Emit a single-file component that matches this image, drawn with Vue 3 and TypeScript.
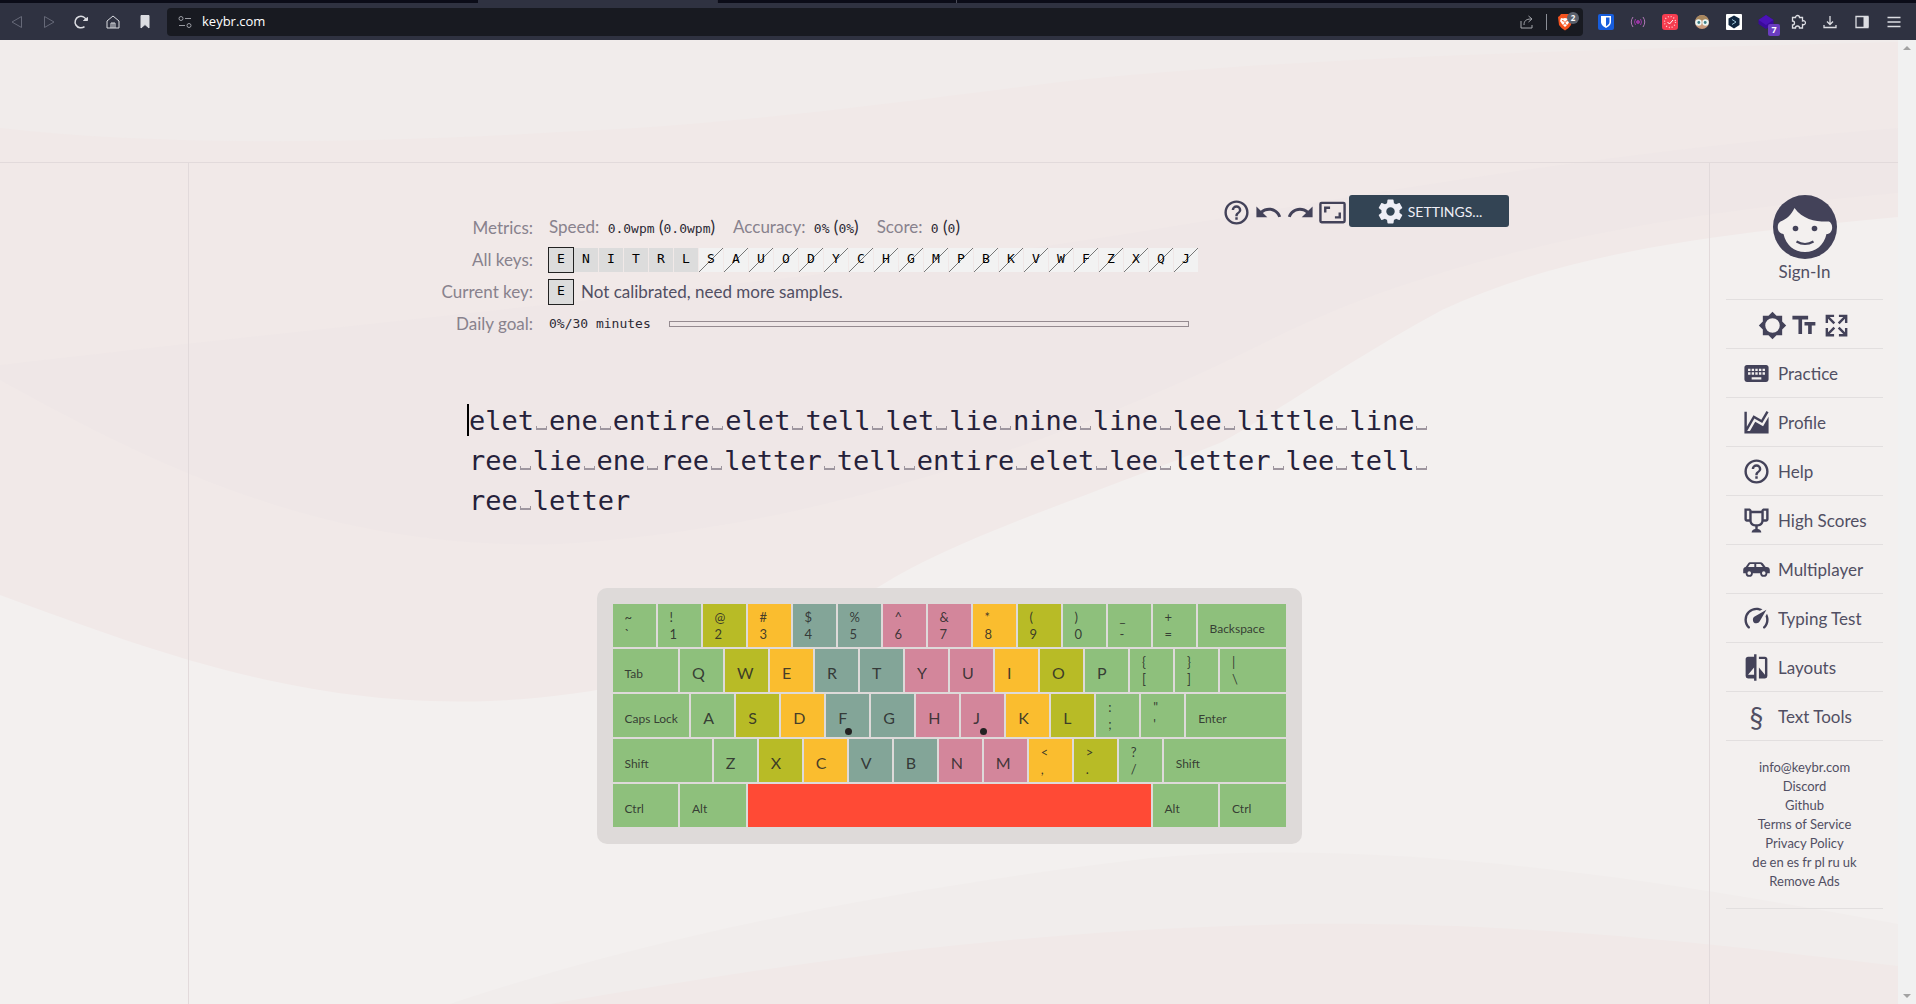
<script setup lang="ts">
interface Key {
  units: number
  zone: string
  label?: string
  letter?: string
  upper?: string
  lower?: string
  home?: boolean
}
interface NavItem {
  label: string
  icon?: string
  glyph?: string
}

const icons: Record<string, string> = {
  help: 'M11,18H13V16H11V18M12,2A10,10 0 0,0 2,12A10,10 0 0,0 12,22A10,10 0 0,0 22,12A10,10 0 0,0 12,2M12,20C7.59,20 4,16.41 4,12C4,7.59 7.59,4 12,4C16.41,4 20,7.59 20,12C20,16.41 16.41,20 12,20M12,6A4,4 0 0,0 8,10H10A2,2 0 0,1 12,8A2,2 0 0,1 14,10C14,12 11,11.75 11,15H13C13,12.75 16,12.5 16,10A4,4 0 0,0 12,6Z',
  undo: 'M12.5,8C9.85,8 7.45,9 5.6,10.6L2,7V16H11L7.38,12.38C8.77,11.22 10.54,10.5 12.5,10.5C16.04,10.5 19.05,12.81 20.1,16L22.47,15.22C21.08,11.03 17.15,8 12.5,8Z',
  redo: 'M18.4,10.6C16.55,9 14.15,8 11.5,8C6.85,8 2.92,11.03 1.54,15.22L3.9,16C4.95,12.81 7.95,10.5 11.5,10.5C13.45,10.5 15.23,11.22 16.62,12.38L13,16H22V7L18.4,10.6Z',
  aspect: 'M19,12H17V15H14V17H19V12M7,9H10V7H5V12H7V9M21,3H3A2,2 0 0,0 1,5V19A2,2 0 0,0 3,21H21A2,2 0 0,0 23,19V5A2,2 0 0,0 21,3M21,19H3V5H21V19Z',
  cog: 'M12,15.5A3.5,3.5 0 0,1 8.5,12A3.5,3.5 0 0,1 12,8.5A3.5,3.5 0 0,1 15.5,12A3.5,3.5 0 0,1 12,15.5M19.43,12.97C19.47,12.65 19.5,12.33 19.5,12C19.5,11.67 19.47,11.34 19.43,11L21.54,9.37C21.73,9.22 21.78,8.95 21.66,8.73L19.66,5.27C19.54,5.05 19.27,4.96 19.05,5.05L16.56,6.05C16.04,5.66 15.5,5.32 14.87,5.07L14.5,2.42C14.46,2.18 14.25,2 14,2H10C9.75,2 9.54,2.18 9.5,2.42L9.13,5.07C8.5,5.32 7.96,5.66 7.44,6.05L4.95,5.05C4.73,4.96 4.46,5.05 4.34,5.27L2.34,8.73C2.21,8.95 2.27,9.22 2.46,9.37L4.57,11C4.53,11.34 4.5,11.67 4.5,12C4.5,12.33 4.53,12.65 4.57,12.97L2.46,14.63C2.27,14.78 2.21,15.05 2.34,15.27L4.34,18.73C4.46,18.95 4.73,19.03 4.95,18.95L7.44,17.94C7.96,18.34 8.5,18.68 9.13,18.93L9.5,21.58C9.54,21.82 9.75,22 10,22H14C14.25,22 14.46,21.82 14.5,21.58L14.87,18.93C15.5,18.67 16.04,18.34 16.56,17.94L19.05,18.95C19.27,19.03 19.54,18.95 19.66,18.73L21.66,15.27C21.78,15.05 21.73,14.78 21.54,14.63L19.43,12.97Z',
  theme: 'M12,18A6,6 0 0,1 6,12A6,6 0 0,1 12,6A6,6 0 0,1 18,12A6,6 0 0,1 12,18M20,15.31L23.31,12L20,8.69V4H15.31L12,0.69L8.69,4H4V8.69L0.69,12L4,15.31V20H8.69L12,23.31L15.31,20H20V15.31Z',
  font: 'M2,4V7H7V19H10V7H15V4H2M21,9H12V12H15V19H18V12H21V9Z',
  expand: 'M9.5,13.09L10.91,14.5L6.41,19H10V21H3V14H5V17.59L9.5,13.09M10.91,9.5L9.5,10.91L5,6.41V10H3V3H10V5H6.41L10.91,9.5M14.5,13.09L19,17.59V14H21V21H14V19H17.59L13.09,14.5L14.5,13.09M13.09,9.5L17.59,5H14V3H21V10H19V6.41L14.5,10.91L13.09,9.5Z',
  keyboard: 'M19,10H17V8H19M19,13H17V11H19M16,10H14V8H16M16,13H14V11H16M16,17H8V15H16M7,10H5V8H7M7,13H5V11H7M8,11H10V13H8M8,8H10V10H8M11,11H13V13H11M11,8H13V10H11M20,5H4C2.89,5 2,5.89 2,7V17A2,2 0 0,0 4,19H20A2,2 0 0,0 22,17V7C22,5.89 21.1,5 20,5Z',
  chart: 'M17.45,15.18L22,7.31V21H2V3H4V15.54L9.5,6L16,9.78L20.24,2.45L21.97,3.45L16.74,12.5L10.23,8.75L4.31,19H6.57L10.96,11.44L17.45,15.18Z',
  trophy: 'M18 2C17.1 2 16 3 16 4H8C8 3 6.9 2 6 2H2V11C2 12 3 13 4 13H6.2C6.6 15 7.9 16.7 11 17V19.08C8 19.54 8 22 8 22H16C16 22 16 19.54 13 19.08V17C16.1 16.7 17.4 15 17.8 13H20C21 13 22 12 22 11V2H18M6 11H4V4H6V11M16 11.5C16 13.43 15.42 15 12 15C8.59 15 8 13.43 8 11.5V6H16V11.5M20 11H18V4H20V11Z',
  car: 'M7.2,6H15.2C16,6 16.7,6.3 17.2,6.9L19.6,10H20.5C22,10 23,11 23,12.5V15H21A3,3 0 0,1 15,15H9A3,3 0 0,1 3,15H1V12.5C1,11 1.8,10.2 3,10L4.9,7.2C5.4,6.4 6.2,6 7.2,6M7,7.5C6.6,7.5 6.4,7.7 6.2,8L5,10H10.2V7.5H7M11.8,7.5V10H17.3L15.8,8C15.5,7.6 15.2,7.5 14.8,7.5H11.8M6,13.5A1.5,1.5 0 1,0 6,16.5A1.5,1.5 0 1,0 6,13.5M18,13.5A1.5,1.5 0 1,0 18,16.5A1.5,1.5 0 1,0 18,13.5Z',
  gauge: 'M12,16A3,3 0 0,1 9,13C9,11.88 9.61,10.9 10.5,10.39L20.21,4.77L14.68,14.35C14.18,15.33 13.17,16 12,16M12,3C13.81,3 15.5,3.5 16.97,4.32L14.87,5.53C14,5.19 13,5 12,5A8,8 0 0,0 4,13C4,15.21 4.89,17.21 6.34,18.65C6.74,19.04 6.74,19.67 6.35,20.06C5.96,20.45 5.32,20.45 4.93,20.07C3.12,18.26 2,15.76 2,13A10,10 0 0,1 12,3M22,13C22,15.76 20.88,18.26 19.07,20.07C18.68,20.45 18.05,20.45 17.66,20.06C17.27,19.67 17.27,19.04 17.66,18.65C19.11,17.2 20,15.21 20,13C20,12 19.81,11 19.46,10.1L20.67,8C21.5,9.5 22,11.18 22,13Z',
  compare: 'M19,3H14V5H19V18L14,12V21H19A2,2 0 0,0 21,19V5C21,3.89 20.1,3 19,3M10,18H5L10,12M10,3H5C3.89,3 3,3.89 3,5V19A2,2 0 0,0 5,21H10V23H12V1H10V3Z',
}

const navItems: NavItem[] = [
  { label: 'Practice', icon: 'keyboard' },
  { label: 'Profile', icon: 'chart' },
  { label: 'Help', icon: 'help' },
  { label: 'High Scores', icon: 'trophy' },
  { label: 'Multiplayer', icon: 'car' },
  { label: 'Typing Test', icon: 'gauge' },
  { label: 'Layouts', icon: 'compare' },
  { label: 'Text Tools', glyph: '§' },
]
const footerLinks = ['info@keybr.com', 'Discord', 'Github', 'Terms of Service', 'Privacy Policy']
const locales = ['de', 'en', 'es', 'fr', 'pl', 'ru', 'uk']

const metrics = [
  { name: 'Speed', last: '0.0wpm', average: '0.0wpm' },
  { name: 'Accuracy', last: '0%', average: '0%' },
  { name: 'Score', last: '0', average: '0' },
]
const allKeys = 'ENITRLSAUODYCHGMPBKVWFZXQJ'.split('')
const included = 6

const lines = [
  'elet ene entire elet tell let lie nine line lee little line ',
  'ree lie ene ree letter tell entire elet lee letter lee tell ',
  'ree letter',
].map((line) => line.split(/( )/).filter((part) => part !== ''))

const G = 'pinky'
const O = 'ring'
const Y = 'middle'
const B = 'left-index'
const P = 'right-index'
const wide = (label: string, units: number): Key => ({ label, units, zone: G })
const pair = (chars: string, zone: string, units = 1): Key => ({ upper: chars[0], lower: chars[1], zone, units })
const letter = (char: string, zone: string): Key => ({ letter: char, zone, units: 1, home: char === 'F' || char === 'J' })

const rows: Key[][] = [
  [pair('~`', G), pair('!1', G), pair('@2', O), pair('#3', Y), pair('$4', B), pair('%5', B), pair('^6', P), pair('&7', P), pair('*8', Y), pair('(9', O), pair(')0', G), pair('_-', G), pair('+=', G), wide('Backspace', 2)],
  [wide('Tab', 1.5), letter('Q', G), letter('W', O), letter('E', Y), letter('R', B), letter('T', B), letter('Y', P), letter('U', P), letter('I', Y), letter('O', O), letter('P', G), pair('{[', G), pair('}]', G), pair('|\\', G, 1.5)],
  [wide('Caps Lock', 1.75), letter('A', G), letter('S', O), letter('D', Y), letter('F', B), letter('G', B), letter('H', P), letter('J', P), letter('K', Y), letter('L', O), pair(':;', G), pair('"\'', G), wide('Enter', 2.25)],
  [wide('Shift', 2.25), letter('Z', G), letter('X', O), letter('C', Y), letter('V', B), letter('B', B), letter('N', P), letter('M', P), pair('<,', Y), pair('>.', O), pair('?/', G), wide('Shift', 2.75)],
  [wide('Ctrl', 1.5), wide('Alt', 1.5), { units: 9, zone: 'thumb' }, wide('Alt', 1.5), wide('Ctrl', 1.5)],
]
</script>

<template>
  <div class="window">
    <div class="tabs"><span class="tab"></span><span class="tab active"></span><span class="tab next"></span></div>
    <header class="browser">
      <button class="tool dim" aria-label="Back"><svg viewBox="0 0 16 16"><path d="M12.5 2.5v11L3 8z" /></svg></button>
      <button class="tool dim" aria-label="Forward"><svg viewBox="0 0 16 16"><path d="M3.500 2.500v11L13 8z" /></svg></button>
      <button class="tool" aria-label="Reload"><svg viewBox="0 0 16 16"><path d="M11.500 12.600A5.800 5.800 0 1 1 13.500 6.500" stroke-width="1.500" /><path d="M10.500 6.500h4V3.500z" fill="currentColor" /></svg></button>
      <button class="tool" aria-label="Home"><svg viewBox="0 0 16 16"><path d="M2 7l6-5 6 5v7H2zM6 14V9h4v5M8 9v5" /></svg></button>
      <button class="tool" aria-label="Bookmark"><svg viewBox="0 0 16 16"><path d="M4 1.500h8v12.500L8 10.500 4 14z" fill="currentColor" /></svg></button>
      <div class="address">
        <svg class="site" viewBox="0 0 16 16"><circle cx="4" cy="4.500" r="2" /><path d="M8 4.500h6M2 11.500h6" /><circle cx="12" cy="11.500" r="2" /></svg>
        <input type="text" value="keybr.com" aria-label="Address" />
        <button class="tool soft" aria-label="Share"><svg viewBox="0 0 16 16"><path d="M2 7v7h11v-3M5 11c0-4 2-6 7-6M9.500 2L13 5l-3.500 3" /></svg></button>
        <span class="divider"></span>
        <button class="tool shield" aria-label="Shields">
          <svg viewBox="0 0 18 18"><path d="M5 1h8l1.500 2L16 4l-1 8-2.500 3L9 17.500 5.500 15 3 12 2 4l1.500-1z" fill="#f4531f" stroke="none" /><path d="M5 5l2 .5L9 5l2 .5L13 5l1 3-2 3-3 3-3-3-2-3z" fill="#fff" stroke="none" /><path d="M6 7.500l2 .7M12 7.500l-2 .7M9 8v2.500l-1.500 1M9 10.500l1.500 1" stroke="#f4531f" /></svg>
          <b class="count">2</b>
        </button>
      </div>
      <div class="extensions">
        <button class="tool" aria-label="Bitwarden"><svg viewBox="0 0 16 16"><rect width="16" height="16" rx="2" fill="#175ddc" stroke="none" /><path d="M3 2h10v6c0 3-3 5-5 6-2-1-5-3-5-6z" fill="#fff" stroke="none" /><path d="M8 3.500h3.500V8c0 2-2 3.500-3.500 4.300z" fill="#175ddc" stroke="none" /></svg></button>
        <button class="tool" aria-label="Podcast"><svg viewBox="0 0 16 16"><g stroke="#9a35a5"><circle cx="8" cy="8" r="1.500" fill="#9a35a5" /><path d="M5.500 5q-2 3 0 6M10.500 5q2 3 0 6" /><path d="M3 3q-3.500 5 0 10M13 3q3.500 5 0 10" stroke="#b07bb6" /></g></svg></button>
        <button class="tool" aria-label="Clock"><svg viewBox="0 0 16 16"><rect width="16" height="16" rx="3" fill="#f63d50" stroke="none" /><circle cx="8" cy="8" r="5.500" stroke="#ffd0d0" stroke-width="1.300" stroke-dasharray="1 1.880" /><path d="M5.500 8l2 2 3.500-4" stroke="#fff" /></svg></button>
        <button class="tool" aria-label="Profile"><svg viewBox="0 0 16 16"><g stroke="none"><circle cx="8" cy="8" r="7" fill="#c99a7c" /><path d="M1.500 6a6.800 6.800 0 0 1 13 0z" fill="#a7875e" /><circle cx="4.500" cy="8.500" r="3.200" fill="#e9f4f3" /><circle cx="11.500" cy="8.500" r="3.200" fill="#e9f4f3" /><circle cx="4.800" cy="8.500" r="1.400" fill="#3b7d85" /><circle cx="11.200" cy="8.500" r="1.400" fill="#3b7d85" /></g></svg></button>
        <button class="tool" aria-label="Translate"><svg viewBox="0 0 16 16"><rect width="16" height="16" rx="1" fill="#fff" stroke="none" /><path d="M8 1.500l5.500 3v6.500L8 14.500l-5.500-3.500V4.500z" fill="#10263f" stroke="none" /><path d="M6 5.500l4 2.500-4 2.500" stroke="#9cc4d8" /></svg></button>
        <button class="tool stack" aria-label="Layers"><svg viewBox="0 0 16 16"><path d="M8 1l7.500 5v4L8 15 .5 10V6z" fill="#3a0a9c" stroke="none" /><path d="M8 1l7.500 5L8 11 .5 6z" fill="#4b12b8" stroke="none" /></svg><b class="badge">7</b></button>
        <button class="tool" aria-label="Extensions"><svg viewBox="0 0 16 16"><path d="M2.500 3.500h3a2 2 0 1 1 4 0h3v3.500a2 2 0 1 1 0 3.500v3.500h-3a2 2 0 0 0-4 0h-3v-3a2 2 0 0 0 0-4z" stroke-width="1.300" /></svg></button>
        <button class="tool" aria-label="Downloads"><svg viewBox="0 0 16 16"><path d="M8 2v8M5 7.500l3 3 3-3M2 11v2.500h12V11" stroke-width="1.300" /></svg></button>
        <button class="tool" aria-label="Sidebar"><svg viewBox="0 0 16 16"><path d="M2 2.500h12v11H2z" stroke-width="1.300" /><path d="M10 3h4v10h-4z" fill="currentColor" /></svg></button>
        <button class="tool" aria-label="Menu"><svg viewBox="0 0 16 16"><path d="M1.500 3.500h13M1.500 8h13M1.500 12.500h13" stroke-width="1.400" /></svg></button>
      </div>
    </header>

    <div class="viewport">
      <div class="page">
        <svg class="waves" viewBox="0 0 1898 964" preserveAspectRatio="none" aria-hidden="true">
          <rect width="1898" height="964" fill="#f3f0ef" />
          <path d="M0 0H1898V177C1700 195 1560 215 1442 270C1350 320 1280 370 1222 402C1080 460 960 496 880 546C740 625 620 655 490 661C300 668 150 610 0 555Z" fill="#f1e9e8" />
          <path d="M0 340C180 440 340 510 560 504C800 490 1050 410 1270 300C1430 220 1640 175 1898 153V88C1500 120 1250 180 980 215C700 250 300 290 0 325Z" fill="#efe7e7" />
          <path d="M0 0H1898V2C1600 10 1300 16 1060 42C880 65 720 86 560 92C360 104 160 106 0 88Z" fill="#f1eceb" />
          <path d="M450 964C640 900 880 850 1150 818C1380 798 1640 836 1898 884V964Z" fill="#f1edec" />
          <path d="M550 964C780 925 1000 890 1300 884C1520 882 1700 902 1898 926V964Z" fill="#f1e9e8" />
        </svg>

        <div class="banner"></div>
        <div class="columns">
          <aside class="gutter"></aside>
          <main>
            <div class="practice">
              <div class="top">
                <dl class="metrics">
                  <div class="metric">
                    <dt>Metrics:</dt>
                    <dd class="values">
                      <span v-for="m in metrics" :key="m.name">{{ m.name }}: <span class="value"><b>{{ m.last }}</b> (<b>{{ m.average }}</b>)</span></span>
                    </dd>
                  </div>
                  <div class="metric">
                    <dt>All keys:</dt>
                    <dd class="cells">
                      <span v-for="(k, i) in allKeys" :key="k" class="cell" :class="{ focused: i === 0, excluded: i >= included }">{{ k }}</span>
                    </dd>
                  </div>
                  <div class="metric">
                    <dt>Current key:</dt>
                    <dd class="current"><span class="cell focused">E</span><span>Not calibrated, need more samples.</span></dd>
                  </div>
                  <div class="metric">
                    <dt>Daily goal:</dt>
                    <dd class="goal"><b>0%/30 minutes</b><span class="bar" role="progressbar" aria-valuenow="0"></span></dd>
                  </div>
                </dl>
                <div class="controls">
                  <button v-for="name in ['help', 'undo', 'redo', 'aspect']" :key="name" class="icon-button" :aria-label="name">
                    <svg class="icon" viewBox="0 0 24 24"><path :d="icons[name]" /></svg>
                  </button>
                  <button class="settings"><svg class="icon" viewBox="0 0 24 24"><path :d="icons.cog" /></svg>SETTINGS...</button>
                </div>
              </div>

              <div class="typing">
                <span class="cursor"></span>
                <div v-for="(line, i) in lines" :key="i" class="line">
                  <template v-for="(part, j) in line" :key="j"><span v-if="part === ' '" class="space">{{ part }}</span><span v-else>{{ part }}</span></template>
                </div>
              </div>

              <div class="keyboard">
                <div v-for="(row, r) in rows" :key="r" class="row">
                  <div v-for="(k, i) in row" :key="i" class="key" :class="k.zone" :style="{ flexGrow: k.units * 45 - 2 }">
                    <span v-if="k.label" class="label">{{ k.label }}</span>
                    <span v-if="k.letter" class="letter">{{ k.letter }}</span>
                    <template v-if="k.upper"><span class="sym">{{ k.upper }}</span><span class="sym">{{ k.lower }}</span></template>
                    <i v-if="k.home" class="dot"></i>
                  </div>
                </div>
              </div>
            </div>
          </main>

          <aside class="sidebar">
            <a href="#" class="account">
              <svg class="avatar" viewBox="0 0 64 64">
                <circle cx="32" cy="32" r="32" fill="#434259" />
                <path d="M21.500 13C18 20 14 24 7.500 26.500C3 29 4 39 10.500 39C13 50 21 57 32 57C43 57 51 50 53.500 39C60 39 61 29 56 26.500C44 27 30 25 21.500 13Z" fill="#f3f0ef" />
                <circle cx="22.500" cy="33.500" r="2.800" fill="#434259" /><circle cx="41.500" cy="33.500" r="2.800" fill="#434259" />
                <path d="M23.500 46.500Q32 51.500 40.500 46.500" fill="none" stroke="#434259" stroke-width="2.200" />
              </svg>
              <span>Sign-In</span>
            </a>
            <div class="quick">
              <button v-for="name in ['theme', 'font', 'expand']" :key="name" class="icon-button" :aria-label="name">
                <svg class="icon" viewBox="0 0 24 24"><path :d="icons[name]" /></svg>
              </button>
            </div>
            <nav>
              <a v-for="item in navItems" :key="item.label" href="#">
                <svg v-if="item.icon" class="icon" viewBox="0 0 24 24"><path :d="icons[item.icon]" /></svg>
                <span v-else class="glyph">{{ item.glyph }}</span>
                {{ item.label }}
              </a>
            </nav>
            <footer>
              <a v-for="l in footerLinks" :key="l" href="#">{{ l }}</a>
              <div class="locales"><a v-for="l in locales" :key="l" href="#">{{ l }}</a></div>
              <a href="#">Remove Ads</a>
            </footer>
          </aside>
        </div>
      </div>
      <div class="scrollbar"><i class="up"></i><i class="down"></i></div>
    </div>
  </div>
</template>

<style>
body { background: #f3f0ef; }
</style>

<style scoped>
* { box-sizing: border-box; }
.window {
  display: flex;
  flex-direction: column;
  min-height: 100vh;
  font-family: Lato, "Open Sans", sans-serif;
  font-size: 17px;
  line-height: 20px;
  color: #514f63;
}
button { padding: 0; border: 0; background: none; font: inherit; color: inherit; }
a { color: inherit; text-decoration: none; }

.tabs { display: flex; height: 3px; background: #0b0c18; }
.tab { width: 25%; border-right: 1px solid #2c2d3a; }
.tab.active { width: 240px; margin-left: -1px; background: #2f3241; }
.tab.next { width: 239px; border-color: #4a4b58; }
.browser { display: flex; align-items: center; height: 37px; padding: 0 6px 0 1px; background: #2f3241; color: #dcdde2; }
.tool { position: relative; display: flex; align-items: center; justify-content: center; width: 32px; height: 28px; flex: none; }
.tool svg, .site { width: 16px; height: 16px; fill: none; stroke: currentColor; }
.dim { color: #666978; }
.soft { color: #a5a7ad; }
.address { display: flex; align-items: center; flex: 1; height: 28px; margin: 0 7px 0 6px; padding-left: 10px; border-radius: 4px; background: #181a21; }
.site { color: #9a9ca3; }
.address input {
  flex: 1;
  min-width: 0;
  height: 20px;
  padding: 0;
  margin: 0 0 2px 9px;
  border: 0;
  outline: 0;
  background: none;
  color: #fff;
  font: 13px/20px "Open Sans", "Noto Sans", sans-serif;
}
.divider { width: 1px; height: 16px; margin-left: 3px; background: #8b8e96; }
.tool.shield { width: 36px; }
.tool.shield svg { width: 18px; height: 18px; }
.count, .badge { position: absolute; color: #fff; font: 700 8px/12px "Open Sans", sans-serif; text-align: center; }
.count { top: 4px; right: 4px; width: 12px; border-radius: 6px; background: #5b616d; }
.badge { right: 2px; bottom: 0; width: 12px; border-radius: 2px; background: #6a3dbf; font-size: 9px; }
.extensions { display: flex; }

.viewport { display: flex; flex: 1; }
.page { position: relative; display: flex; flex-direction: column; flex: 1; }
.waves { position: absolute; inset: 0; z-index: -1; width: 100%; height: 100%; }
.scrollbar { display: flex; flex-direction: column; justify-content: space-between; align-items: center; width: 18px; padding: 6px 0; background: #f1f1f1; }
.scrollbar i { border: 4px solid transparent; }
.scrollbar .up { border-top: 0; border-bottom-color: #a3a3a3; }
.scrollbar .down { border-bottom: 0; border-top-color: #a3a3a3; }
.banner { height: 123px; border-bottom: 1px solid #e2dadb; }
.columns { display: flex; flex: 1; }
.gutter { width: 189px; border-right: 1px solid #e2dadb; }
main { flex: 1; padding: 32px 0; }
.practice { max-width: 1120px; margin: 0 auto; }
.top { display: flex; justify-content: space-between; align-items: flex-start; }

.metrics { margin: 17px 0 0; }
.metric { display: flex; align-items: center; gap: 16px; height: 32px; }
dt { width: 144px; text-align: right; color: #88828d; }
dd { display: flex; align-items: center; margin: 0; }
dd b { font: 13px/20px "DejaVu Sans Mono", monospace; color: #2d2a35; }
.values { gap: 18px; color: #88828d; }
.value { margin-left: 4px; font-size: 17px; color: #2d2a35; }
.cells { gap: 1px; }
.cell { width: 24px; height: 24px; background: #dcdcdc; color: #000; font: 13px/22px "DejaVu Sans Mono", monospace; text-align: center; }
.cell.focused { outline: 1px solid #222; z-index: 1; }
.cell.excluded { background: linear-gradient(to bottom right, transparent 48%, #777 49%, #777 51%, transparent 52%) #f2f2f2; }
.current { gap: 8px; }
.goal { gap: 18px; }
.bar { width: 520px; height: 6px; border: 1px solid #958b90; }

.controls { display: flex; align-items: center; }
.icon { display: block; width: 29px; height: 29px; flex: none; fill: #434259; }
.icon-button { display: flex; align-items: center; justify-content: center; width: 32px; height: 32px; padding-top: 2px; }
.settings { display: flex; align-items: center; justify-content: center; gap: 3px; width: 160px; height: 32px; padding-top: 1px; margin-left: 1px; border-radius: 3px; background: #334454; color: #eeeef6; font-size: 14px; }
.settings .icon { fill: #eeeef6; }

.typing { position: relative; width: 960px; margin: 61px auto 0; color: #25213a; font: 27px/40px "DejaVu Sans Mono", monospace; }
.line { white-space: nowrap; height: 40px; }
.space {
  display: inline-block;
  width: 11px;
  height: 4px;
  margin: 0 2px;
  overflow: hidden;
  border: 1px solid #9e969f;
  border-width: 0 1px 2px;
  line-height: 2px;
  white-space: pre;
}
.cursor { position: absolute; left: -2px; top: 3px; width: 2px; height: 32px; background: #000; }

.keyboard { display: flex; flex-direction: column; gap: 2px; width: 705px; margin: 67px auto 0; padding: 16px 16px 17px; border-radius: 10px; background: #dedad9; }
.row { display: flex; gap: 2px; }
.key { position: relative; flex: 1 1 0; min-width: 0; height: 43px; padding-top: 5px; color: #282828dd; }
.label, .letter, .sym { display: block; margin-left: 12px; white-space: nowrap; }
.label { font-size: 12px; line-height: 39px; }
.letter { font-size: 16px; line-height: 37px; }
.sym { font-size: 13px; line-height: 17px; }
.dot { position: absolute; left: 19px; bottom: 2px; width: 7px; height: 7px; border-radius: 50%; background: #222; }
.pinky { background: #8ec07c; }
.ring { background: #b8bb26; }
.middle { background: #fabd2f; }
.left-index { background: #83a598; }
.right-index { background: #d3869b; }
.thumb { background: #ff4a35; }

.sidebar { width: 189px; padding: 32px 15px 0 16px; border-left: 1px solid #e2dadb; }
.account { display: flex; flex-direction: column; align-items: center; gap: 3px; height: 105px; border-bottom: 1px solid #e2dfdf; }
.avatar { width: 64px; height: 64px; }
.quick { display: flex; justify-content: center; align-items: center; height: 49px; border-bottom: 1px solid #e2dfdf; }
nav a { display: flex; align-items: center; gap: 7px; height: 49px; padding: 1px 0 0 16px; border-bottom: 1px solid #e2dfdf; }
.glyph { width: 29px; text-align: center; font-size: 28px; }
footer { display: flex; flex-direction: column; align-items: center; padding: 17px 0; border-bottom: 1px solid #e2dfdf; font-size: 13px; line-height: 19px; }
.locales { display: flex; gap: 3px; }
</style>
